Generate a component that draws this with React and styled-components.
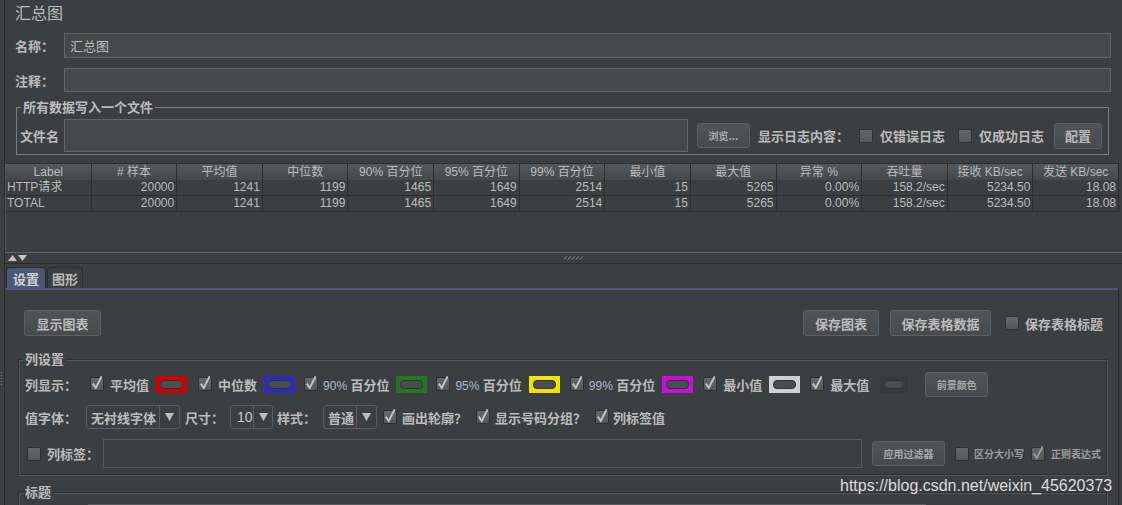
import React from "react";
import styled, { createGlobalStyle } from "styled-components";

const CJK = `"Noto Sans CJK SC", "Liberation Sans", sans-serif`;
const LAT = `"Liberation Sans", "Noto Sans CJK SC", sans-serif`;

const GlobalStyle = createGlobalStyle`
  html, body { margin: 0; padding: 0; background: #3c3f41; }
  body { font-family: ${CJK}; color: #bbbbbb; font-size: 13px; }
  *, *::before, *::after { box-sizing: border-box; }
`;

const Frame = styled.div`
  position: relative;
  display: flex;
  width: 1122px;
  height: 505px;
  overflow: hidden;
  background: #3c3f41;
`;

const Rail = styled.div`
  flex: none;
  width: 5px;
  border-right: 1px solid #2b2b2b;
  padding-top: 371px;
`;

const RailGrip = styled.div`
  width: 4px;
  height: 15px;
  background-image: radial-gradient(circle, #85888a 0.7px, transparent 1px);
  background-size: 3px 3px;
`;

const Main = styled.div`
  flex: 1;
  min-width: 0;
  display: flex;
  flex-direction: column;
`;

const PageTitle = styled.div`
  height: 25px;
  line-height: 24px;
  padding-left: 10px;
  font-size: 16px;
`;

const FieldRow = styled.div`
  display: flex;
  align-items: stretch;
  height: ${(p) => p.$h}px;
  margin-top: ${(p) => p.$mt}px;
  padding: 0 11px 0 10px;
`;

const FieldLabel = styled.div`
  flex: none;
  width: ${(p) => p.$w ?? 49}px;
  display: flex;
  align-items: center;
  font-weight: 700;
`;

const TextBox = styled.div`
  flex: 1;
  min-width: 0;
  height: ${(p) => (p.$h ? `${p.$h}px` : "auto")};
  margin-left: ${(p) => p.$ml ?? 0}px;
  background: ${(p) => (p.$flat ? "transparent" : "#45494a")};
  border: 1px solid ${(p) => (p.$flat ? "#595c5e" : "#646464")};
  display: flex;
  align-items: center;
  padding-left: 5px;
  font-size: 13px;
`;

const Group = styled.div`
  display: flex;
  flex-direction: column;
  flex: none;
  margin: ${(p) => p.$mt}px ${(p) => p.$mr ?? 0}px 0 ${(p) => p.$ml ?? 0}px;
  padding-bottom: ${(p) => p.$pb ?? 0}px;
  border: 1px solid ${(p) => (p.$etched ? "#2d2f31" : "#7a7d7f")};
  box-shadow: ${(p) =>
    p.$etched ? "inset 1px 1px 0 #54575a, 1px 1px 0 #54575a" : "none"};
`;

const GroupTitle = styled.div`
  align-self: flex-start;
  height: 16px;
  line-height: 16px;
  margin: -9px 0 0 4px;
  padding: 0 2px;
  background: #3c3f41;
  font-weight: 700;
`;

const Row = styled.div`
  display: flex;
  align-items: center;
  flex: none;
  height: ${(p) => p.$h}px;
  margin-top: ${(p) => p.$mt ?? 0}px;
  padding: 0 ${(p) => p.$pr ?? 0}px 0 ${(p) => p.$pl ?? 0}px;
`;

const Label = styled.span`
  flex: none;
  font-weight: 700;
  white-space: nowrap;
  margin-left: ${(p) => p.$ml ?? 0}px;
  font-size: ${(p) => (p.$small ? 10 : 13)}px;
  color: ${(p) => (p.$small ? "#9c9c9c" : "#bbbbbb")};
`;

const Num = styled.span`
  font-family: ${LAT};
  font-weight: 400;
  font-size: 12px;
  color: #a3bbd1;
`;

const Button = styled.button`
  flex: none;
  width: ${(p) => p.$w}px;
  height: ${(p) => p.$h ?? 26}px;
  margin: 0 0 0 ${(p) => p.$ml ?? 0}px;
  padding: 0;
  display: flex;
  align-items: center;
  justify-content: center;
  border: 1px solid #5d6062;
  border-radius: 3px;
  background: linear-gradient(#505456, #474b4d);
  font-family: ${CJK};
  font-weight: 700;
  font-size: ${(p) => (p.$small ? 10 : 13)}px;
  color: ${(p) => (p.$small ? "#a9a9a9" : "#bbbbbb")};
`;

const BoxSq = styled.span`
  flex: none;
  width: 14px;
  height: 14px;
  border: 1px solid #2e3032;
  border-radius: 2px;
  background: linear-gradient(#64686a, #55585a);
  display: inline-flex;
  align-items: flex-start;
  justify-content: flex-start;
`;

const CheckSvg = styled.svg`
  overflow: visible;
  display: block;
`;

const CheckItem = styled.span`
  flex: none;
  display: inline-flex;
  align-items: center;
  gap: ${(p) => p.$gap ?? 6}px;
  margin-left: ${(p) => p.$ml ?? 0}px;
`;

function Check({ checked, dim }) {
  return (
    <BoxSq>
      {checked && (
        <CheckSvg width="12" height="12" viewBox="0 0 12 12">
          <path
            d="M1.8 5.6 L4.8 10 L10.6 -1.6"
            fill="none"
            stroke={dim ? "#9a9a9a" : "#c6c6c6"}
            strokeWidth="1.9"
          />
        </CheckSvg>
      )}
    </BoxSq>
  );
}

function CheckLabel({ checked, children, ml, gap, small, dim }) {
  return (
    <CheckItem $ml={ml} $gap={gap}>
      <Check checked={checked} dim={dim} />
      <Label $small={small}>{children}</Label>
    </CheckItem>
  );
}

const Swatch = styled.span`
  flex: none;
  display: inline-flex;
  width: ${(p) => p.$w ?? 31}px;
  height: 17px;
  padding: 4px;
  margin-left: ${(p) => p.$ml ?? 7}px;
  background: ${(p) => p.$c};
`;

const SwatchInner = styled.span`
  flex: 1;
  border-radius: 4px;
  border: 1px solid #2f3133;
  background: #4b4e51;
`;

const Combo = styled.span`
  flex: none;
  display: flex;
  width: ${(p) => p.$w}px;
  height: 24px;
  margin-left: ${(p) => p.$ml ?? 0}px;
  border: 1px solid #5c5f61;
  border-radius: 3px;
`;

const ComboText = styled.span`
  flex: 1;
  display: flex;
  align-items: center;
  padding-left: ${(p) => (p.$latin ? 6 : 4)}px;
  font-family: ${(p) => (p.$latin ? LAT : CJK)};
  font-weight: ${(p) => (p.$latin ? 400 : 700)};
  font-size: ${(p) => (p.$latin ? 14 : 13)}px;
  color: ${(p) => (p.$latin ? "#c2c8d0" : "#bbbbbb")};
`;

const ComboArrow = styled.span`
  flex: none;
  width: 20px;
  border-left: 1px solid #5c5f61;
  display: flex;
  align-items: center;
  justify-content: center;
`;

function ComboBox({ w, ml, text, latin }) {
  return (
    <Combo $w={w} $ml={ml}>
      <ComboText $latin={latin}>{text}</ComboText>
      <ComboArrow>
        <svg width="9" height="8" viewBox="0 0 9 8">
          <path d="M0 0 H9 L4.5 8 Z" fill="#bdbdbd" />
        </svg>
      </ComboArrow>
    </Combo>
  );
}

/* ---------- table ---------- */

const TablePane = styled.div`
  flex: none;
  margin-top: 8px;
  height: 90px;
  border-left: 1px solid #55585a;
  border-bottom: 1px solid #606366;
`;

const Grid = styled.div`
  width: 1113px;
  display: grid;
  grid-template-columns: repeat(13, 1fr);
  font-family: ${LAT};
  font-size: 12px;
`;

const HeadCell = styled.div`
  height: 17px;
  line-height: 16px;
  text-align: center;
  white-space: nowrap;
  overflow: hidden;
  background: linear-gradient(#54585b, #46494c);
  border-top: 1px solid #2c2e30;
  border-right: 1px solid #2c2e30;
  color: #bbbbbb;
`;

const Cell = styled.div`
  height: 16px;
  line-height: 15px;
  padding: 0 2px 0 1px;
  text-align: ${(p) => (p.$left ? "left" : "right")};
  white-space: nowrap;
  overflow: hidden;
  border-right: 1px solid #2c2e30;
  border-bottom: 1px solid #2c2e30;
  color: #bbbbbb;
`;

const SplitBar = styled.div`
  flex: none;
  height: 11px;
  display: grid;
  grid-template-columns: 1fr auto 1fr;
  align-items: center;
  padding-left: 3px;
  border-bottom: 1px solid #2b2b2b;
`;

const Arrows = styled.span`
  display: flex;
  gap: 1px;
`;

const Grip = styled.span`
  display: flex;
  margin-left: 16px;
`;

const TabStrip = styled.div`
  flex: none;
  display: flex;
  gap: 1px;
  height: 21px;
  margin-top: 3px;
  padding-left: 1px;
`;

const Tab = styled.div`
  display: flex;
  align-items: center;
  padding: 0 ${(p) => (p.$active ? 6 : 4)}px;
  border: 1px solid #2b2b2b;
  border-bottom: none;
  border-radius: 4px 4px 0 0;
  font-weight: 700;
  background: ${(p) => (p.$active ? "#4a5878" : "#3c3f41")};
  color: ${(p) => (p.$active ? "#d2d2d2" : "#bbbbbb")};
`;

const TabPanel = styled.div`
  flex: 1;
  min-height: 0;
  display: flex;
  flex-direction: column;
  margin-right: 3px;
  border-top: 2px solid #46597f;
  border-right: 1px solid #2b2b2b;
  padding: 0 11px 0 13px;
`;

const ButtonRow = styled.div`
  flex: none;
  display: flex;
  align-items: center;
  height: 26px;
  margin-top: 20px;
  padding: 0 4px 0 6px;
`;

const Spacer = styled.span`
  flex: 1;
`;

const Watermark = styled.div`
  position: absolute;
  left: 840px;
  top: 477px;
  font-family: ${LAT};
  font-size: 16px;
  line-height: 18px;
  color: rgba(235, 235, 235, 0.92);
  white-space: nowrap;
`;

const headers = [
  "Label", "# 样本", "平均值", "中位数", "90% 百分位", "95% 百分位", "99% 百分位",
  "最小值", "最大值", "异常 %", "吞吐量", "接收 KB/sec", "发送 KB/sec",
];

const rows = [
  ["HTTP请求", "20000", "1241", "1199", "1465", "1649", "2514", "15", "5265", "0.00%", "158.2/sec", "5234.50", "18.08"],
  ["TOTAL", "20000", "1241", "1199", "1465", "1649", "2514", "15", "5265", "0.00%", "158.2/sec", "5234.50", "18.08"],
];

const series = [
  { key: "avg", label: "平均值", color: "#d20000", ml: 13 },
  { key: "med", label: "中位数", color: "#2c2cb8", ml: 11 },
  { key: "p90", num: "90%", label: "百分位", color: "#257525", ml: 9, gap: 5 },
  { key: "p95", num: "95%", label: "百分位", color: "#f2e400", ml: 9, gap: 5 },
  { key: "p99", num: "99%", label: "百分位", color: "#c60fda", ml: 10, gap: 5 },
  { key: "min", label: "最小值", color: "#d0d0d0", ml: 10 },
  { key: "max", label: "最大值", color: "#37393b", ml: 10, swMl: 11, swW: 28 },
];

export default function App() {
  return (
    <>
      <GlobalStyle />
      <Frame>
        <Rail>
          <RailGrip />
        </Rail>
        <Main>
          <PageTitle>汇总图</PageTitle>
          <FieldRow $mt={8} $h={25}>
            <FieldLabel>名称：</FieldLabel>
            <TextBox>汇总图</TextBox>
          </FieldRow>
          <FieldRow $mt={10} $h={24}>
            <FieldLabel>注释：</FieldLabel>
            <TextBox />
          </FieldRow>

          <Group $mt={15} $ml={11} $mr={13} $pb={2}>
            <GroupTitle>所有数据写入一个文件</GroupTitle>
            <Row $h={33} $mt={4} $pl={3} $pr={6}>
              <FieldLabel $w={44}>文件名</FieldLabel>
              <TextBox $h={33} />
              <Button $w={53} $h={25} $ml={9} $small>
                浏览...
              </Button>
              <Label $ml={8}>显示日志内容：</Label>
              <CheckLabel ml={10} gap={7}>仅错误日志</CheckLabel>
              <CheckLabel ml={13} gap={7}>仅成功日志</CheckLabel>
              <Button $w={48} $h={26} $ml={10}>
                配置
              </Button>
            </Row>
          </Group>

          <TablePane>
            <Grid>
              {headers.map((h) => (
                <HeadCell key={h}>{h}</HeadCell>
              ))}
              {rows.map((r, ri) =>
                r.map((c, ci) => (
                  <Cell key={`${ri}-${ci}`} $left={ci === 0}>
                    {c}
                  </Cell>
                ))
              )}
            </Grid>
          </TablePane>

          <SplitBar>
            <Arrows>
              <svg width="9" height="6" viewBox="0 0 9 6">
                <path d="M0 6 L4.5 0 L9 6 Z" fill="#c4c4c4" />
              </svg>
              <svg width="9" height="6" viewBox="0 0 9 6">
                <path d="M0 0 H9 L4.5 6 Z" fill="#c4c4c4" />
              </svg>
            </Arrows>
            <Grip>
              <svg width="19" height="4" viewBox="0 0 19 4">
                {[0, 4, 8, 12, 16].map((x) => (
                  <path
                    key={x}
                    d={`M${x} 3.5 L${x + 2.5} 0.5`}
                    stroke="#8e9193"
                    strokeWidth="1"
                    fill="none"
                  />
                ))}
              </svg>
            </Grip>
            <span />
          </SplitBar>

          <TabStrip>
            <Tab $active>设置</Tab>
            <Tab>图形</Tab>
          </TabStrip>

          <TabPanel>
            <ButtonRow>
              <Button $w={77}>显示图表</Button>
              <Spacer />
              <Button $w={76}>保存图表</Button>
              <Button $w={101} $ml={11}>
                保存表格数据
              </Button>
              <CheckLabel ml={14} gap={6}>保存表格标题</CheckLabel>
            </ButtonRow>

            <Group $mt={23} $pb={6} $etched>
              <GroupTitle>列设置</GroupTitle>
              <Row $h={24} $mt={5} $pl={6}>
                <Label>列显示：</Label>
                {series.map((s) => (
                  <React.Fragment key={s.key}>
                    <CheckLabel checked ml={s.ml} gap={s.gap ?? 6}>
                      {s.num && <Num>{s.num} </Num>}
                      {s.label}
                    </CheckLabel>
                    <Swatch $c={s.color} $ml={s.swMl ?? 7} $w={s.swW}>
                      <SwatchInner />
                    </Swatch>
                  </React.Fragment>
                ))}
                <Button $w={63} $h={25} $ml={17} $small>
                  前景颜色
                </Button>
              </Row>
              <Row $h={24} $mt={9} $pl={6}>
                <Label>值字体：</Label>
                <ComboBox w={94} ml={9} text="无衬线字体" />
                <Label $ml={5}>尺寸：</Label>
                <ComboBox w={43} ml={6} text="10" latin />
                <Label $ml={4}>样式：</Label>
                <ComboBox w={54} ml={7} text="普通" />
                <CheckLabel checked ml={6} gap={5}>画出轮廓？</CheckLabel>
                <CheckLabel checked ml={9} gap={5}>显示号码分组？</CheckLabel>
                <CheckLabel checked ml={9} gap={4}>列标签值</CheckLabel>
              </Row>
              <Row $h={29} $mt={10} $pl={8} $pr={5}>
                <CheckLabel gap={6}>列标签：</CheckLabel>
                <TextBox $h={29} $ml={4} $flat />
                <Button $w={73} $h={25} $ml={10} $small>
                  应用过滤器
                </Button>
                <CheckLabel ml={10} gap={5} small>区分大小写</CheckLabel>
                <CheckLabel checked dim ml={7} gap={6} small>正则表达式</CheckLabel>
              </Row>
            </Group>

            <Group $mt={17} $etched>
              <GroupTitle>标题</GroupTitle>
              <Row $h={30} $mt={4} $pl={69} $pr={180}>
                <TextBox $h={30} $flat />
              </Row>
            </Group>
          </TabPanel>
        </Main>
        <Watermark>https://blog.csdn.net/weixin_45620373</Watermark>
      </Frame>
    </>
  );
}
